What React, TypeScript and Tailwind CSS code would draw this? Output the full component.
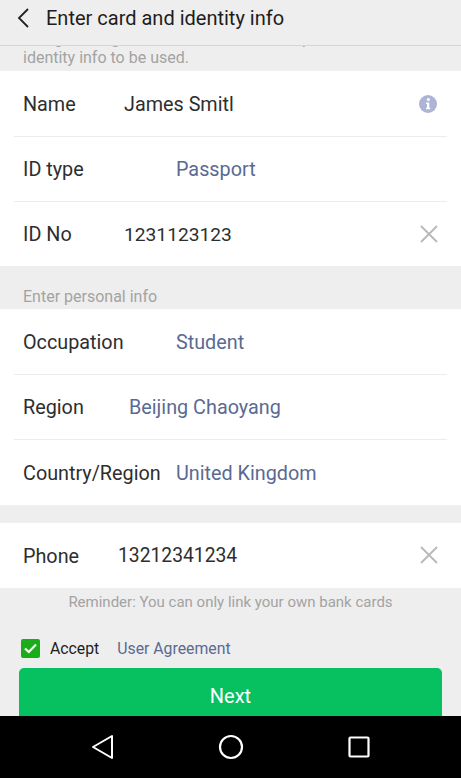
import React from 'react';

const font = { fontFamily: 'Roboto, "Liberation Sans", sans-serif' };

const ClearIcon = () => (
  <svg width="18" height="18" viewBox="0 0 18 18" fill="none" stroke="#b8b8b8" strokeWidth="1.8" className="absolute right-[9px] top-[23px]">
    <path d="M1 1L17 17M17 1L1 17" />
  </svg>
);

const InfoIcon = () => (
  <svg width="18" height="18" viewBox="0 0 18 18" className="absolute right-[10px] top-[23px]">
    <circle cx="9" cy="9" r="9" fill="#adb4d6" />
    <circle cx="9.4" cy="4.6" r="1.5" fill="#fff" />
    <path d="M7 7.6H10.3V12.8H11.2V14.2H7V12.8H8V9H7Z" fill="#fff" />
  </svg>
);

type RowProps = {
  label: string;
  value: string;
  valueClass: string;
  link?: boolean;
  divider?: boolean;
  short?: boolean;
  icon?: React.ReactNode;
};

const Row: React.FC<RowProps> = ({ label, value, valueClass, link, divider, short, icon }) => (
  <div className={`relative mx-[14px] ${short ? 'h-[64px]' : 'h-[65px]'}`}>
    <div className={`h-full flex items-center pl-[9px] pt-[2px] text-[19.8px] ${divider ? 'border-b border-[#ececec]' : ''}`}>
      <span className="w-0 whitespace-nowrap text-[#2e2e2e]">{label}</span>
      <span className={`whitespace-nowrap ${valueClass} ${link ? 'text-[#5a6a92]' : 'text-[#2e2e2e]'}`}>{value}</span>
    </div>
    {icon}
  </div>
);

export default function App() {
  return (
    <div className="w-[461px] h-[778px] flex flex-col overflow-hidden bg-[#eeeeee]" style={font}>
      {/* Title bar */}
      <div className="h-[46px] shrink-0 flex items-center pb-[9px] border-b border-[#d6d6d6] bg-[#eeeeee]">
        <svg width="14" height="22" viewBox="0 0 14 22" fill="none" stroke="#222" strokeWidth="1.8" className="ml-[16px]">
          <path d="M12 2L3 11L12 20" />
        </svg>
        <span className="ml-[16px] text-[20px] text-[#1d1d1d]">Enter card and identity info</span>
      </div>

      {/* Scrolled note, its first line runs under the title bar */}
      <div className="h-[25px] shrink-0 overflow-hidden flex flex-col justify-end pl-[23px] pb-[4px] text-[16px] leading-[19px] text-[#a3a3a3]">
        <div className="whitespace-nowrap">Using, storing the real-name info will depend on</div>
        <div className="whitespace-nowrap">identity info to be used.</div>
      </div>

      <div className="bg-white shrink-0 pt-[1px]">
        <Row label="Name" value="James Smitl" valueClass="ml-[101px]" divider icon={<InfoIcon />} />
        <Row label="ID type" value="Passport" valueClass="ml-[153px]" link divider />
        <Row label="ID No" value="1231123123" valueClass="ml-[101px] text-[19.2px]" short icon={<ClearIcon />} />
      </div>

      <div className="h-[43px] shrink-0 flex items-end pl-[23px] text-[16px] leading-[24px] text-[#a3a3a3]">Enter personal info</div>

      <div className="bg-white shrink-0 pt-[1px]">
        <Row label="Occupation" value="Student" valueClass="ml-[153px]" link divider />
        <Row label="Region" value="Beijing Chaoyang" valueClass="ml-[106px]" link divider />
        <Row label="Country/Region" value="United Kingdom" valueClass="ml-[153px]" link />
      </div>

      <div className="h-[18px] shrink-0" />

      <div className="bg-white shrink-0">
        <Row label="Phone" value="13212341234" valueClass="ml-[95px] text-[19.3px]" icon={<ClearIcon />} />
      </div>

      <div className="mt-[5px] text-center text-[15px] leading-[18px] text-[#a3a3a3]">
        Reminder: You can only link your own bank cards
      </div>

      <div className="mt-[27px] ml-[21px] flex items-center h-[20px]">
        <span className="w-[19px] h-[19px] rounded-[2px] bg-[#1aad19] flex items-center justify-center">
          <svg width="13" height="11" viewBox="0 0 13 11" fill="none" stroke="#fff" strokeWidth="2.2">
            <path d="M1 5.5L4.8 9L12 1.5" />
          </svg>
        </span>
        <span className="ml-[10px] pt-[1px] text-[15.8px] text-[#1d1d1d]">Accept</span>
        <span className="ml-[18px] pt-[1px] text-[15.8px] text-[#5a6a92]">User Agreement</span>
      </div>

      {/* Button runs on under the nav bar */}
      <div className="flex-1 min-h-0 mt-[10px] mx-[19px] overflow-hidden">
        <button className="w-full h-[56px] rounded-[5px] bg-[#07c160] text-white text-[20px] flex items-center justify-center">
          Next
        </button>
      </div>

      {/* Android nav bar */}
      <div className="h-[62px] shrink-0 bg-black flex items-center justify-center gap-[103px]">
        <svg width="24" height="26" viewBox="0 0 24 26" fill="none" stroke="#fff" strokeWidth="2" strokeLinejoin="round">
          <path d="M21 2V24L2 13Z" />
        </svg>
        <svg width="26" height="26" viewBox="0 0 26 26" fill="none" stroke="#fff" strokeWidth="2.2">
          <circle cx="13" cy="13" r="11" />
        </svg>
        <svg width="24" height="24" viewBox="0 0 24 24" fill="none" stroke="#fff" strokeWidth="2.2" strokeLinejoin="round">
          <rect x="2.5" y="2.5" width="19" height="19" rx="1" />
        </svg>
      </div>
    </div>
  );
}
